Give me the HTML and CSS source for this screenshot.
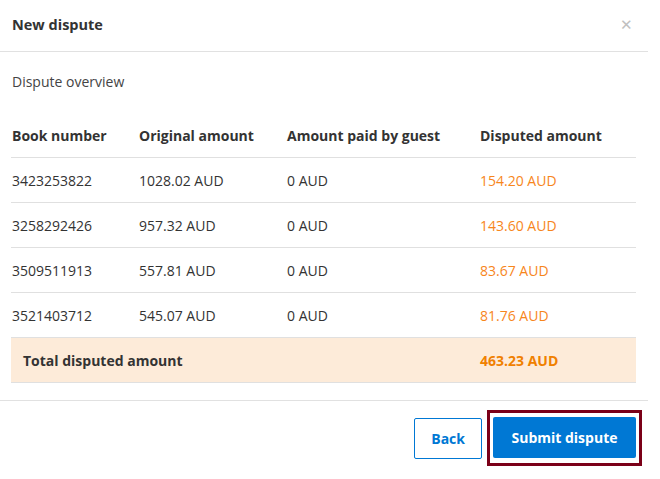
FILE: index.html
```html
<!DOCTYPE html>
<html>
<head>
<meta charset="utf-8">
<link rel="stylesheet" href="styles.css">
</head>
<body>
<div class="dialog">
  <div class="dialog-header">
    <h1 class="title">New dispute</h1>
    <span class="close">&#x2715;</span>
  </div>
  <div class="dialog-body">
    <p class="subtitle">Dispute overview</p>
    <table class="table">
      <thead>
        <tr><th class="c1">Book number</th><th class="c2">Original amount</th><th class="c3">Amount paid by guest</th><th class="c4">Disputed amount</th></tr>
      </thead>
      <tbody>
        <tr><td>3423253822</td><td>1028.02 AUD</td><td>0 AUD</td><td class="orange">154.20 AUD</td></tr>
        <tr><td>3258292426</td><td>957.32 AUD</td><td>0 AUD</td><td class="orange">143.60 AUD</td></tr>
        <tr><td>3509511913</td><td>557.81 AUD</td><td>0 AUD</td><td class="orange">83.67 AUD</td></tr>
        <tr><td>3521403712</td><td>545.07 AUD</td><td>0 AUD</td><td class="orange">81.76 AUD</td></tr>
        <tr class="total"><td colspan="3" class="total-label">Total disputed amount</td><td class="total-value">463.23 AUD</td></tr>
      </tbody>
    </table>
  </div>
  <div class="dialog-footer">
    <button class="btn btn-secondary">Back</button>
    <span class="focus-ring"><button class="btn btn-primary">Submit dispute</button></span>
  </div>
</div>
</body>
</html>
```
FILE: styles.css
```css
html, body {
  margin: 0;
  padding: 0;
  background: #fff;
}
body {
  font-family: "Segoe UI", "Open Sans", "Noto Sans", sans-serif;
  color: #333;
  font-size: 14px;
}
.dialog {
  width: 648px;
}
.dialog-header {
  height: 52px;
  box-sizing: border-box;
  border-bottom: 1px solid #e1e1e1;
  display: flex;
  align-items: center;
  justify-content: space-between;
  padding: 0 15px 2px 12px;
}
.title {
  margin: 0;
  font-size: 14.5px;
  font-weight: 700;
  color: #333;
}
.close {
  color: #c0c0c0;
  font-size: 15px;
  line-height: 1;
}
.dialog-body {
  padding: 18px 12px 17px 11px;
}
.subtitle {
  margin: 0 0 19px 1px;
  font-size: 14px;
  color: #444;
  line-height: 24px;
}
.table {
  width: 625px;
  border-collapse: collapse;
}
.table th {
  text-align: left;
  font-weight: 700;
  height: 44px;
  padding: 0 1px;
  border-bottom: 1px solid #e0e0e0;
  vertical-align: middle;
}
.table td {
  height: 44px;
  padding: 0 1px;
  border-bottom: 1px solid #e0e0e0;
  vertical-align: middle;
}
.c1 { width: 125px; }
.c2 { width: 146px; }
.c3 { width: 191px; }
.orange { color: #f7861c; }
.total td {
  background: #fdebd9;
  font-weight: 700;
}
.table .total-label { padding-left: 12px; }
.total-value { color: #f08000; }
.dialog-footer {
  border-top: 1px solid #e1e1e1;
  display: flex;
  justify-content: flex-end;
  align-items: center;
  gap: 5px;
  padding: 9px 6px 0 0;
}
.btn {
  font-family: inherit;
  font-size: 14px;
  font-weight: 700;
  height: 41px;
  border-radius: 2px;
  cursor: pointer;
}
.btn-secondary {
  background: #fff;
  color: #0078d4;
  border: 1px solid #0078d4;
  padding: 0 16px;
}
.focus-ring {
  display: inline-flex;
  border: 3px solid #7b0018;
  padding: 4px 3px 5px;
}
.btn-primary {
  background: #0078d4;
  color: #fff;
  border: none;
  padding: 0 18px;
  width: 143px;
}
```
